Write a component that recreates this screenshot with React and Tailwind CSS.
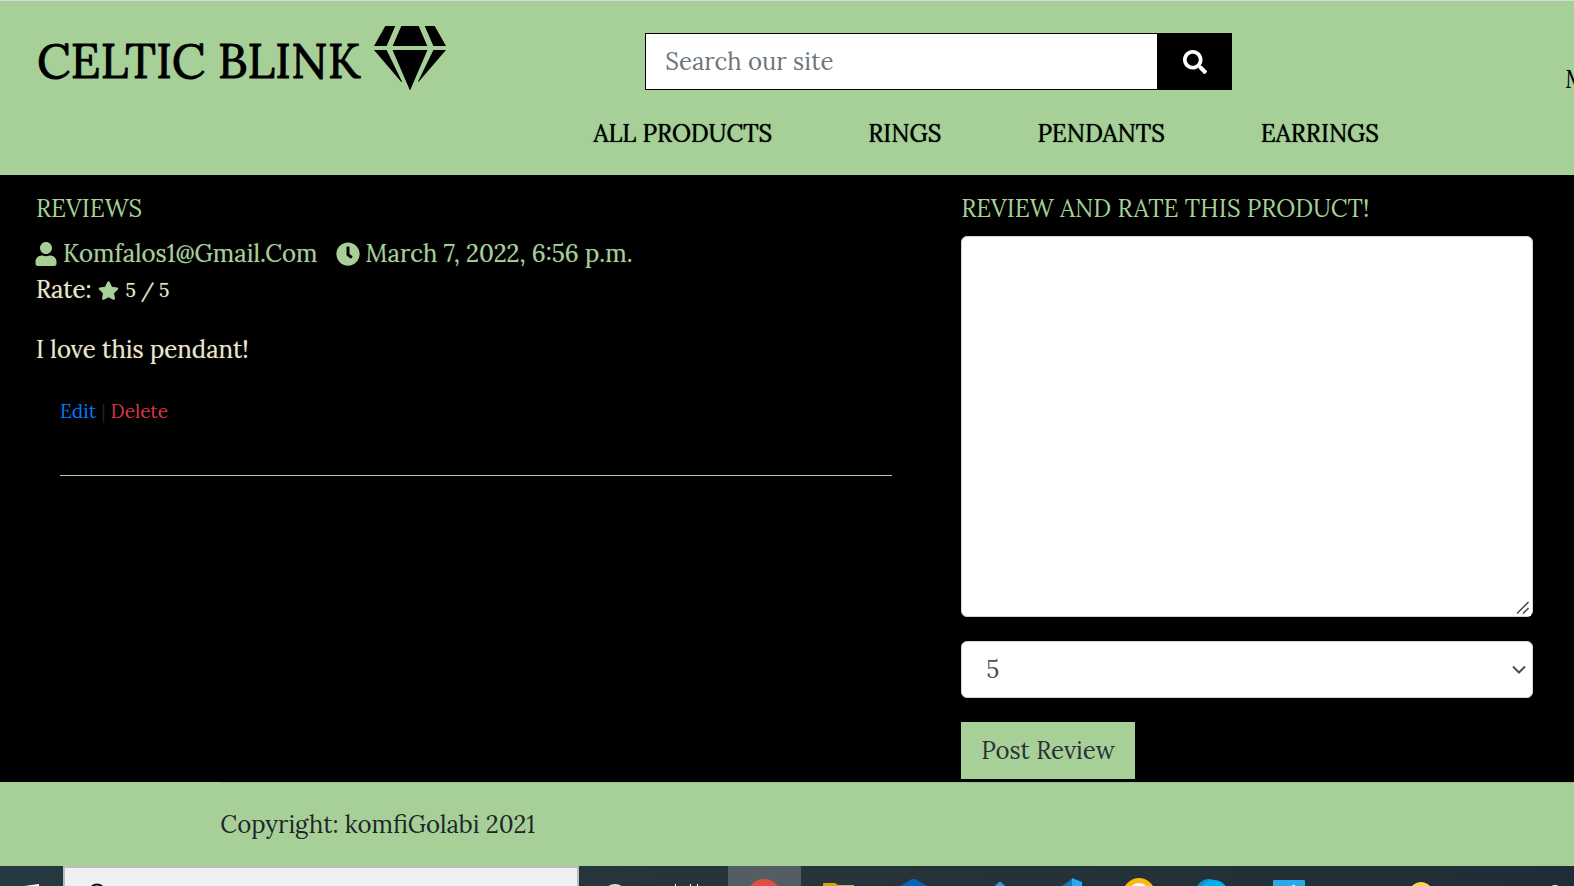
import React from "react";
import { FaSearch, FaUser, FaClock, FaStar } from "react-icons/fa";

const categories = ["ALL PRODUCTS", "RINGS", "PENDANTS", "EARRINGS"];

function Gem() {
  return (
    <svg viewBox="0 0 576 512" className="h-16 w-[72px] shrink-0" fill="currentColor" stroke="none" aria-hidden="true">
      <path d="M485.500 0L576 160H474.900L405.700 0h79.800zm-128 0l69.200 160H149.300L218.500 0h139zm-267 0h79.800l-69.200 160H0L90.500 0zM0 192h100.700l123 251.700c1.500 3.100-2.700 5.900-5 3.300L0 192zm148.200 0h279.600l-137 318.200c-1 2.400-4.500 2.400-5.500 0L148.200 192zm204.100 251.700l123-251.700H576L357.300 446.900c-2.300 2.700-6.500-.1-5-3.200z" />
    </svg>
  );
}

function Header() {
  return (
    <header className="h-[175px] overflow-hidden border-t border-[#d9d9dc] bg-[#a6d098] text-black">
      <div className="flex pt-[25px]">
        <div className="w-[41%] shrink-0 pl-[37px]">
          <a href="#home" className="flex items-start gap-[14px] text-[48px] leading-[64px] [-webkit-text-stroke:1px_black]">
            <span className="pt-[3px]">CELTIC BLINK</span>
            <Gem />
          </a>
        </div>
        <form className="mt-[7px] flex h-[57px] w-[37.3%] shrink-0" onSubmit={(e) => e.preventDefault()}>
          <input
            type="text"
            aria-label="Search our site"
            placeholder="Search our site"
            className="min-w-0 flex-1 border border-black bg-white px-[19px] text-[24px] leading-9 placeholder:text-[#6c757d]"
          />
          <button type="submit" aria-label="Search" className="flex w-[74px] items-center justify-center bg-black text-white">
            <FaSearch className="size-6" />
          </button>
        </form>
        <a href="#account" className="ml-auto w-[9px] shrink-0 pt-9 text-[24px] leading-9">M</a>
      </div>
      <nav className="mt-[18px] flex gap-24 pl-[37.7%] text-[24px] leading-9 [text-shadow:0_0_1px_black]">
        {categories.map((c) => (
          <a key={c} href="#products" className="whitespace-nowrap">{c}</a>
        ))}
      </nav>
    </header>
  );
}

function Reviews() {
  return (
    <section className="w-[61%] shrink-0 pl-9 text-[24px] leading-9 text-[#a6d098]">
      <h2>REVIEWS</h2>
      <div className="mt-[9px] flex items-center [text-shadow:0_0_1px_#a6d09880]">
        <FaUser className="-ml-[2px] mr-[5px] size-6" />
        <span>Komfalos1@Gmail.Com</span>
        <FaClock className="ml-[18px] mr-[6px] size-6" />
        <span>March 7, 2022, 6:56 p.m.</span>
      </div>
      <p className="flex items-center text-[#ebe7cc] [text-shadow:0_0_1px_#ebe7cc80]">
        Rate:
        <FaStar className="ml-[6px] mr-[7px] size-[21px] text-[#a6d098]" />
        <span className="text-[19px]">5 / 5</span>
      </p>
      <p className="mt-6 text-[#ebe7cc] [text-shadow:0_0_1px_#ebe7cc80]">I love this pendant!</p>
      <div className="pl-6 pr-[68px]">
        <p className="mt-[25px] text-[19px] text-[#212529]">
          <a href="#edit" className="text-[#007bff]">Edit</a> | <a href="#delete" className="text-[#dc3545]">Delete</a>
        </p>
        <hr className="mt-[46px] border-[#a6d098]" />
      </div>
    </section>
  );
}

function ReviewForm() {
  return (
    <form className="flex-1 pl-px pr-[41px] text-[24px] leading-9" onSubmit={(e) => e.preventDefault()}>
      <label htmlFor="review" className="block text-[#a6d098]">REVIEW AND RATE THIS PRODUCT!</label>
      <div className="relative mt-[9px]">
        <textarea
          id="review"
          className="block h-[381px] w-full resize-y rounded-md border border-[#ced4da] bg-white p-4 text-[#495057]"
        />
        <svg viewBox="0 0 16 16" className="pointer-events-none absolute bottom-px right-[2px] size-4 bg-white" fill="none" stroke="#444" strokeWidth="1.500" aria-hidden="true">
          <path d="M2 13.500L13.500 2M8 13.500L13.500 8" />
        </svg>
      </div>
      <div className="relative mt-6">
        <select
          aria-label="Rating"
          defaultValue="5"
          className="block h-[57px] w-full appearance-none rounded-md border border-[#ced4da] bg-white px-6 text-[#495057]"
        >
          <option>5</option>
          <option>4</option>
          <option>3</option>
          <option>2</option>
          <option>1</option>
        </select>
        <svg viewBox="0 0 14 9" className="pointer-events-none absolute right-[7px] top-6 h-[9px] w-[14px]" fill="none" stroke="#495057" strokeWidth="2" aria-hidden="true">
          <path d="M1 1.500l6 6 6-6" />
        </svg>
      </div>
      <button type="submit" className="mt-6 block h-[57px] bg-[#a6d098] px-5 text-[#2b3035]">Post Review</button>
    </form>
  );
}

function Slot({ children, active, wide }) {
  return (
    <span className={`shrink-0 ${wide ? "w-[76px]" : "w-[73px]"} ${active ? "bg-[#525e64]" : ""}`}>
      <svg viewBox="0 0 73 20" className="h-5 w-[73px]" aria-hidden="true">{children}</svg>
    </span>
  );
}

function Taskbar() {
  return (
    <div className="flex h-5 overflow-hidden bg-linear-to-r from-[#263840] via-[#27343a] to-[#1f2d36]">
      <span className="w-[63px] shrink-0">
        <svg viewBox="0 0 63 20" className="h-5 w-[63px]" aria-hidden="true"><path d="M24 20l15-2v2z" fill="#fff" /></svg>
      </span>
      <div className="h-10 w-[516px] shrink-0 border-2 border-[#bdbdbd] bg-[#f0f0f0]">
        <svg viewBox="0 0 60 18" className="h-[18px] w-[60px]" aria-hidden="true"><circle cx="32" cy="24" r="7.500" fill="none" stroke="#111" strokeWidth="2" /></svg>
      </div>
      <Slot><circle cx="36" cy="30" r="11" fill="none" stroke="#ddd" strokeWidth="2" /></Slot>
      <Slot wide><path d="M23.500 18v2M38.500 18v2M45.500 18v2" stroke="#fff" /></Slot>
      <Slot active><circle cx="36" cy="30" r="17" fill="#de4f42" /></Slot>
      <Slot><path d="M22 20v-2q0-1 1-1h11l3 2h16v1z" fill="#daa010" /><path d="M37 19h16v1H37z" fill="#c9ad69" /></Slot>
      <Slot><path d="M26 20l12-7 3 0 12 7z" fill="#0a62b8" /></Slot>
      <Slot><path d="M48 20l4-4h2l4 4z" fill="#3f94de" /></Slot>
      <Slot><path d="M42 20l11-8v8z" fill="#1478b9" /><path d="M52 12l10 4v4H52z" fill="#29a9ef" /></Slot>
      <Slot><circle cx="46" cy="28" r="16" fill="#fdb812" /><circle cx="46" cy="28" r="11" fill="#fff" /></Slot>
      <Slot><circle cx="43" cy="26" r="13" fill="#0b94d4" /><circle cx="48" cy="28" r="14" fill="#06aef0" /></Slot>
      <Slot><rect x="34" y="14" width="32" height="20" rx="1" fill="#2ba8e8" /><path d="M52 20l3-1h1v1z" fill="#fff" /></Slot>
      <span className="flex-1" />
      <Slot><circle cx="29" cy="28" r="12" fill="#fbd14f" /></Slot>
      <span className="w-9 shrink-0" />
      <Slot><circle cx="54" cy="26" r="7" fill="#eee" /></Slot>
    </div>
  );
}

export default function App() {
  return (
    <div className="overflow-hidden bg-black font-['Lora','Liberation_Serif',serif]">
      <Header />
      <main className="flex pb-[3px] pt-4">
        <Reviews />
        <ReviewForm />
      </main>
      <footer className="bg-[#a6d098] pl-[14%]">
        <p className="border-t border-[#97bd8b] pb-[23px] pt-6 text-[24px] leading-9 text-[#212529]">Copyright: komfiGolabi 2021</p>
      </footer>
      <Taskbar />
    </div>
  );
}
